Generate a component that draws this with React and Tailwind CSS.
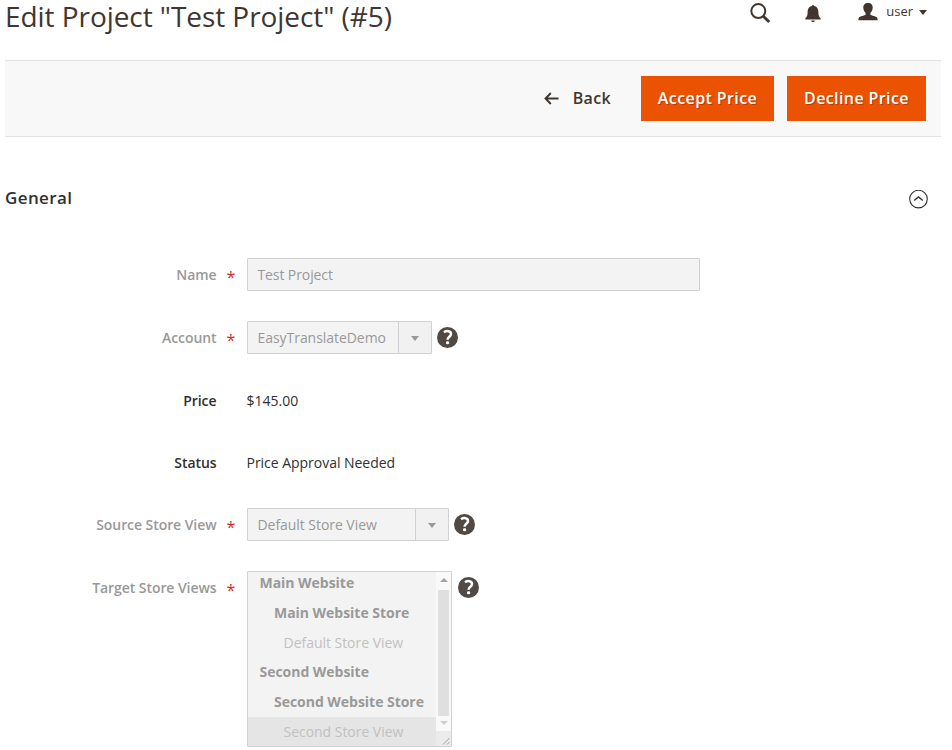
const SearchIcon = () => (
  <svg width="21" height="21" viewBox="0 0 21 21" fill="none" stroke="#41362f">
    <circle cx="8.3" cy="8.1" r="7" strokeWidth="2" />
    <path d="M13 13L19.2 19" strokeWidth="3" />
  </svg>
);

const BellIcon = () => (
  <svg width="16" height="18" viewBox="0 0 16 18" fill="#41362f">
    <path d="M7 1C7 -.3 9 -.3 9 1C12.4 1.7 13.4 4.2 13.4 7.5C13.4 10.5 14.2 12 15.6 13V14.4H.4V13C1.8 12 2.6 10.5 2.6 7.5C2.6 4.2 3.6 1.7 7 1Z" />
    <path d="M6.2 15.4H9.8C9.6 17.5 6.4 17.5 6.2 15.4Z" />
  </svg>
);

const UserIcon = () => (
  <svg width="20" height="18" viewBox="0 0 20 18" fill="#41362f">
    <path d="M10 0C13.2 0 14.9 2 14.7 5C14.5 7.3 13.5 9 12.4 10V11.4C13.2 12.8 18.3 12.8 19 14.6C19.4 15.4 19.7 16.4 19.7 17.2H.3C.3 16.4 .6 15.4 1 14.6C1.7 12.8 6.8 12.8 7.6 11.4V10C6.5 9 5.5 7.3 5.3 5C5.1 2 6.8 0 10 0Z" />
  </svg>
);

const Triangle = ({ className }) => (
  <svg className={className} width="8" height="5" viewBox="0 0 8 5" preserveAspectRatio="none" fill="currentColor">
    <path d="M0 0H8L4 5Z" />
  </svg>
);

const HelpIcon = () => (
  <svg className="mt-[6px] shrink-0" width="21" height="21" viewBox="0 0 21 21" fill="none">
    <circle cx="10.5" cy="10.5" r="10.5" fill="#514943" />
    <path d="M7 5.2C9.6 3.4 14 3.8 14 7C14 9.7 10.6 9.9 10.6 12.7" stroke="#fff" strokeWidth="2.5" />
    <rect x="9" y="14.3" width="3.2" height="2.9" rx="1.3" fill="#fff" />
  </svg>
);

const Field = ({ label, required, children, className }) => (
  <div className={`flex items-start ${className}`}>
    <div
      className={`flex w-[242px] shrink-0 leading-[33px] font-semibold ${required ? "text-[#999]" : "text-[#303030]"}`}
    >
      <span className="w-[211.5px] text-right tracking-[-0.07px]">{label}</span>
      {required && (
        <span className="ml-[10px] pt-[3px] text-[16px] leading-[33px] font-medium text-[#e22626]">*</span>
      )}
    </div>
    {children}
  </div>
);

const Select = ({ value, className }) => (
  <div className={`flex h-[33px] rounded-[1px] border border-[#d1d1d1] bg-[#f3f3f3] text-[#999] ${className}`}>
    <span className="flex-1 pl-[9.5px] leading-[31px] tracking-[-0.05px] whitespace-nowrap">{value}</span>
    <span className="flex w-[33px] items-center justify-center border-l border-[#d1d1d1] bg-[#f1f1f1]">
      <Triangle className="mt-[2px]" />
    </span>
  </div>
);

const STORES = [
  { name: "Main Website", className: "pl-[11.5px] h-[30px] font-bold" },
  { name: "Main Website Store", className: "pl-[26px] h-[30px] font-bold" },
  { name: "Default Store View", className: "pl-[35.5px] h-[29px] text-[#c1c1c1]" },
  { name: "Second Website", className: "pl-[11.5px] h-[30px] font-bold" },
  { name: "Second Website Store", className: "pl-[26px] h-[30px] font-bold" },
  { name: "Second Store View", className: "pl-[35.5px] h-[29px] bg-[#e5e5e5] text-[#c1c1c1]" },
];

const StoreList = () => (
  <div className="flex h-[176px] w-[205px] overflow-hidden rounded-[1px] border border-[#d1d1d1] bg-[#f3f3f3] text-[#999]">
    <div className="flex flex-1 flex-col justify-end overflow-hidden">
      {STORES.map((s) => (
        <div key={s.name} className={`shrink-0 leading-[30px] tracking-[-0.03px] whitespace-nowrap ${s.className}`}>
          {s.name}
        </div>
      ))}
    </div>
    <div className="flex w-[15px] flex-col items-center bg-[#f9f9f9]">
      <Triangle className="mt-[6px] h-[4px] w-[8px] rotate-180 text-[#a3a3a3]" />
      <div className="mt-[8px] h-[126px] w-[11px] bg-[#dfdfdf]" />
      <Triangle className="mt-[5px] h-[4px] w-[8px] text-[#cfcfcf]" />
      <svg className="mt-auto bg-[#ebebeb]" width="15" height="15" viewBox="0 0 15 15" stroke="#969696" fill="none">
        <path d="M7 13.5L13.5 7M11 13.5L13.5 11" strokeWidth="0.9" />
      </svg>
    </div>
  </div>
);

export default function App() {
  return (
    <div className="h-[750px] w-[952px] overflow-hidden bg-white pr-[11px] pl-[5px] font-['Open_Sans','Noto_Sans',sans-serif] text-[14px] text-[#303030]">
      <header className="flex h-[60px] items-start justify-between">
        <h1 className="text-[28px] leading-[32px] tracking-[-0.06px] whitespace-nowrap text-[#41362f]">
          Edit Project "Test Project" (#5)
        </h1>
        <div className="flex items-start pr-[14px] text-[#41362f]">
          <div className="mt-[3px] mr-[34px]"><SearchIcon /></div>
          <div className="mt-[5px] mr-[37px]"><BellIcon /></div>
          <div className="mt-[3px]"><UserIcon /></div>
          <span className="ml-[8px] text-[13px] leading-[23px]">user</span>
          <Triangle className="mt-[10px] ml-[6px]" />
        </div>
      </header>

      <div className="flex h-[77px] items-center justify-end border-y border-[#e3e3e3] bg-[#f8f8f8] pr-[15px] text-[16px] font-semibold tracking-[0.4px]">
        <button className="mr-[30px] flex items-center text-[#41362f]">
          <svg className="mr-[13.5px]" width="15" height="13" viewBox="0 0 15 13" fill="none" stroke="#41362f" strokeWidth="1.9">
            <path d="M1.5 6.5H14.5M6.8 1L1.5 6.5L6.8 12" />
          </svg>
          <span className="pb-[2px] tracking-[0.33px]">Back</span>
        </button>
        <button className="mr-[13px] h-[45px] w-[133px] bg-[#eb5202] pb-[2px] whitespace-nowrap text-white [text-shadow:1px_1px_0_rgba(0,0,0,0.25)]">
          Accept Price
        </button>
        <button className="h-[45px] w-[139px] bg-[#eb5202] pb-[2px] whitespace-nowrap text-white [text-shadow:1px_1px_0_rgba(0,0,0,0.25)]">
          Decline Price
        </button>
      </div>

      <div className="mt-[46px] flex h-[30px] items-center justify-between pr-[13px]">
        <h2 className="text-[17px] font-semibold tracking-[0.38px]">General</h2>
        <svg className="mt-[2px]" width="19" height="19" viewBox="0 0 19 19" fill="none" stroke="#303030">
          <circle cx="9.5" cy="9.1" r="8.8" strokeWidth="1.1" />
          <path d="M5.2 10.6L9.5 6.9L13.8 10.6" strokeWidth="1.3" />
        </svg>
      </div>

      <Field label="Name" required className="mt-[45px] h-[63px]">
        <div className="h-[33px] w-[453px] rounded-[1px] border border-[#d1d1d1] bg-[#f3f3f3] pl-[9.5px] leading-[31px] tracking-[-0.1px] text-[#999]">
          Test Project
        </div>
      </Field>
      <Field label="Account" required className="h-[63px]">
        <Select value="EasyTranslateDemo" className="mr-[5px] w-[185px]" />
        <HelpIcon />
      </Field>
      <Field label="Price" className="h-[62px]">
        <span className="-ml-[0.5px] leading-[33px]">$145.00</span>
      </Field>
      <Field label="Status" className="h-[62px]">
        <span className="-ml-[0.5px] leading-[33px] tracking-[-0.03px]">Price Approval Needed</span>
      </Field>
      <Field label="Source Store View" required className="h-[63px]">
        <Select value="Default Store View" className="mr-[5px] w-[202px]" />
        <HelpIcon />
      </Field>
      <Field label="Target Store Views" required className="h-[179px]">
        <div className="mr-[6px]"><StoreList /></div>
        <HelpIcon />
      </Field>
    </div>
  );
}
